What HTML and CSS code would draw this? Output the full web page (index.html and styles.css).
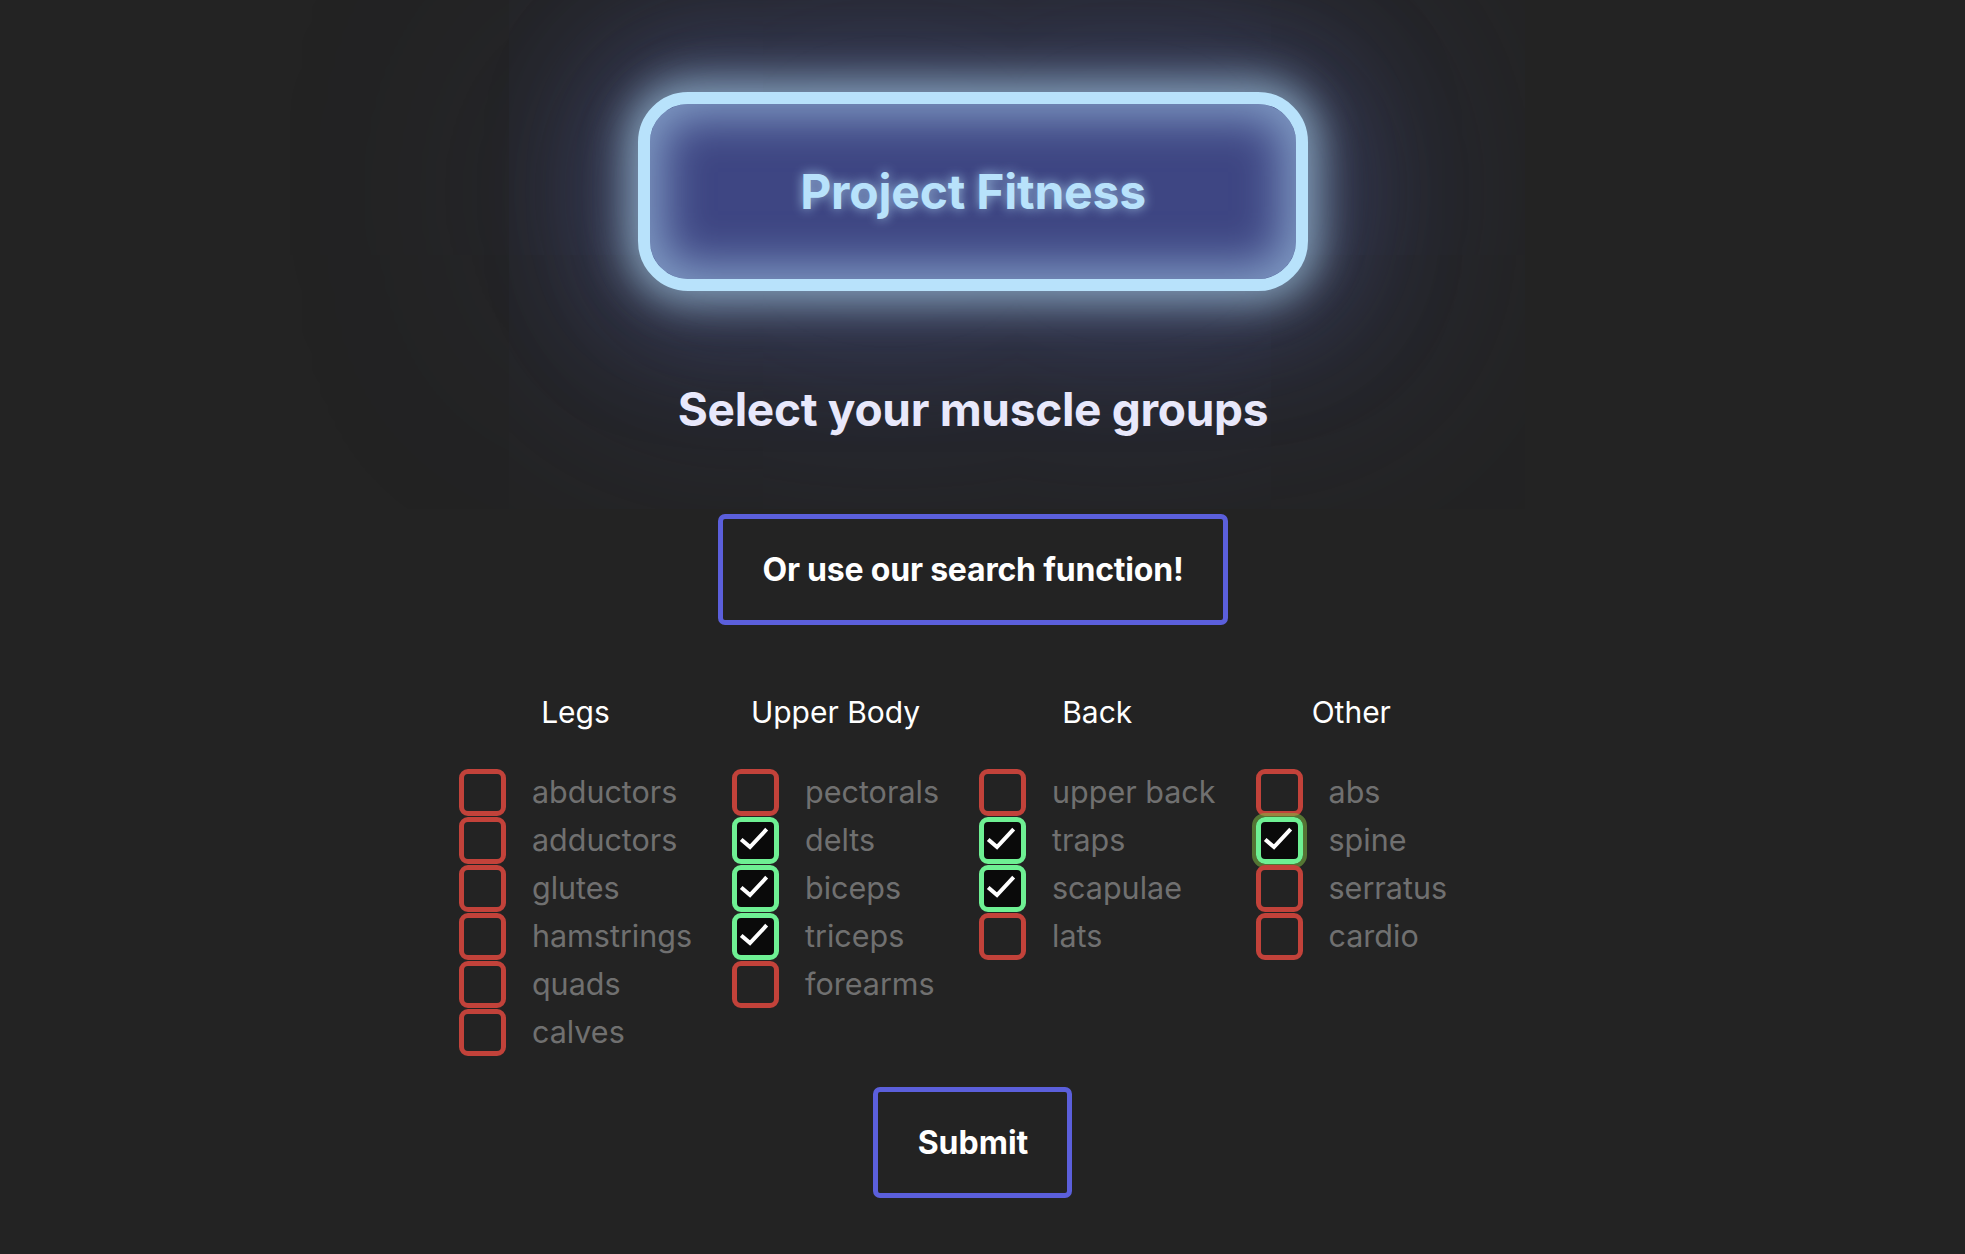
FILE: index.html
```html
<!DOCTYPE html>
<html lang="en">
<head>
<meta charset="utf-8">
<title>Project Fitness</title>
<link rel="stylesheet" href="styles.css">
</head>
<body>
<main class="page">
  <header class="brand">
    <h1 class="brand-title">Project Fitness</h1>
  </header>
  <h2 class="headline">Select your muscle groups</h2>
  <button class="btn btn-search" type="button">Or use our search function!</button>

  <form class="picker">
    <div class="groups">
      <section class="group">
        <h3 class="group-title">Legs</h3>
        <ul class="options">
          <li class="option"><span class="box"></span><span class="label">abductors</span></li>
          <li class="option"><span class="box"></span><span class="label">adductors</span></li>
          <li class="option"><span class="box"></span><span class="label">glutes</span></li>
          <li class="option"><span class="box"></span><span class="label">hamstrings</span></li>
          <li class="option"><span class="box"></span><span class="label">quads</span></li>
          <li class="option"><span class="box"></span><span class="label">calves</span></li>
        </ul>
      </section>
      <section class="group">
        <h3 class="group-title">Upper Body</h3>
        <ul class="options">
          <li class="option"><span class="box"></span><span class="label">pectorals</span></li>
          <li class="option"><span class="box checked"><svg viewBox="0 0 37 37"><path d="M5.7 18.7 L13 25 L28.3 8.7"/></svg></span><span class="label">delts</span></li>
          <li class="option"><span class="box checked"><svg viewBox="0 0 37 37"><path d="M5.7 18.7 L13 25 L28.3 8.7"/></svg></span><span class="label">biceps</span></li>
          <li class="option"><span class="box checked"><svg viewBox="0 0 37 37"><path d="M5.7 18.7 L13 25 L28.3 8.7"/></svg></span><span class="label">triceps</span></li>
          <li class="option"><span class="box"></span><span class="label">forearms</span></li>
        </ul>
      </section>
      <section class="group">
        <h3 class="group-title">Back</h3>
        <ul class="options">
          <li class="option"><span class="box"></span><span class="label">upper back</span></li>
          <li class="option"><span class="box checked"><svg viewBox="0 0 37 37"><path d="M5.7 18.7 L13 25 L28.3 8.7"/></svg></span><span class="label">traps</span></li>
          <li class="option"><span class="box checked"><svg viewBox="0 0 37 37"><path d="M5.7 18.7 L13 25 L28.3 8.7"/></svg></span><span class="label">scapulae</span></li>
          <li class="option"><span class="box"></span><span class="label">lats</span></li>
        </ul>
      </section>
      <section class="group">
        <h3 class="group-title">Other</h3>
        <ul class="options">
          <li class="option"><span class="box"></span><span class="label">abs</span></li>
          <li class="option"><span class="box checked focused"><svg viewBox="0 0 37 37"><path d="M5.7 18.7 L13 25 L28.3 8.7"/></svg></span><span class="label">spine</span></li>
          <li class="option"><span class="box"></span><span class="label">serratus</span></li>
          <li class="option"><span class="box"></span><span class="label">cardio</span></li>
        </ul>
      </section>
    </div>
    <button class="btn btn-submit" type="button">Submit</button>
  </form>
</main>
</body>
</html>
```

FILE: styles.css
```css
html, body {
  margin: 0;
  padding: 0;
  background: #232323;
}

body {
  font-family: Inter, "Noto Sans", "Liberation Sans", sans-serif;
  color: #ffffff;
  min-height: 1254px;
  overflow: hidden;
}

.page {
  display: flex;
  flex-direction: column;
  align-items: center;
  padding: 92px 19px 0 0;
}

.brand {
  width: 646px;
  height: 175px;
  box-sizing: content-box;
  border: 12px solid #b8e2fb;
  border-radius: 50px;
  background: #3e4683;
  display: flex;
  align-items: center;
  justify-content: center;
  box-shadow:
    inset 0 0 45px 14px rgba(184, 226, 251, 0.55),
    0 0 40px 12px rgba(184, 226, 251, 0.6),
    0 0 110px 40px rgba(90, 100, 170, 0.35),
    0 0 260px 80px rgba(70, 80, 150, 0.35);
}

.brand-title {
  margin: 0;
  font-size: 48px;
  font-weight: 700;
  color: #b8e2fb;
  letter-spacing: -0.2px;
  text-shadow: 0 0 12px rgba(184, 226, 251, 0.75);
}

.headline {
  margin: 91px 0 0;
  font-size: 46px;
  line-height: 54px;
  font-weight: 700;
  color: #e8e8fb;
  letter-spacing: -0.3px;
}

.btn {
  font-family: inherit;
  font-size: 32px;
  line-height: 38px;
  font-weight: 700;
  color: #ffffff;
  background: #232323;
  border: 5px solid #5b5fdb;
  border-radius: 7px;
  cursor: pointer;
  white-space: nowrap;
}

.btn-search {
  margin-top: 78px;
  height: 111px;
  padding: 0 39px;
  letter-spacing: -0.2px;
}

.picker {
  display: flex;
  flex-direction: column;
  align-items: center;
  margin-top: 70px;
}

.groups {
  display: flex;
  gap: 40px;
  padding-right: 40px;
}

.group {
  display: flex;
  flex-direction: column;
}

.group-title {
  margin: 0;
  text-align: center;
  font-size: 30px;
  line-height: 35px;
  font-weight: 400;
  color: #ffffff;
}

.options {
  list-style: none;
  margin: 38px 0 0;
  padding: 0;
}

.option {
  display: flex;
  align-items: center;
  height: 48px;
}

.box {
  flex: none;
  position: relative;
  width: 37px;
  height: 37px;
  border: 5px solid #c2423a;
  border-radius: 9px;
  display: flex;
  align-items: center;
  justify-content: center;
}

.box.checked {
  border-color: #6ef093;
  background: #0a0a0a;
}

.box.focused {
  outline: 4px solid rgba(125, 185, 65, 0.55);
  outline-offset: 0;
}

.box svg {
  width: 37px;
  height: 37px;
  fill: none;
  stroke: #ffffff;
  stroke-width: 4;
  stroke-linecap: square;
  stroke-linejoin: miter;
}

.label {
  margin-left: 26px;
  font-size: 30.5px;
  line-height: 36px;
  color: #707070;
  white-space: nowrap;
}

.btn-submit {
  margin-top: 31px;
  width: 199px;
  height: 111px;
  padding: 0;
}
```
